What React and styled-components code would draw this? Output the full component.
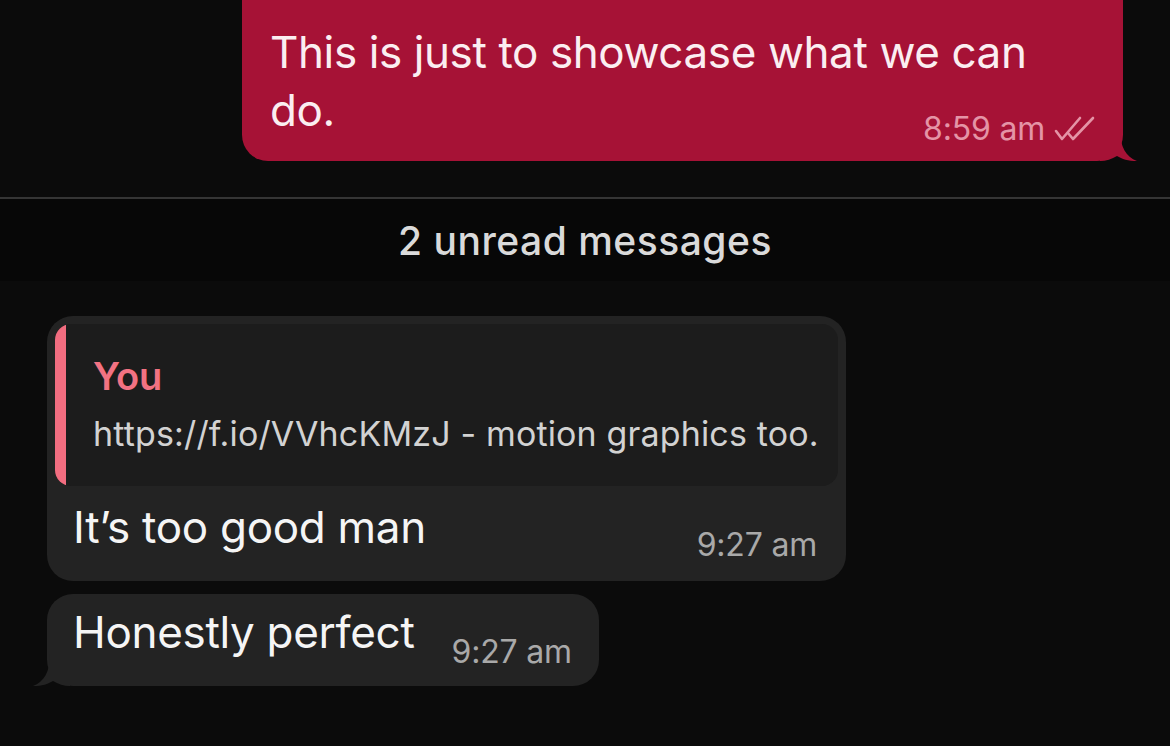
import React from 'react';
import styled, { createGlobalStyle } from 'styled-components';

const GlobalStyle = createGlobalStyle`
  html, body {
    margin: 0;
    padding: 0;
    background: #0b0b0b;
  }
  body {
    font-family: Inter, "Noto Sans", "Liberation Sans", sans-serif;
    -webkit-font-smoothing: antialiased;
  }
`;

const Screen = styled.div`
  width: 1170px;
  height: 746px;
  overflow: hidden;
  display: flex;
  flex-direction: column;
  background: #0b0b0b;
`;

const OutRow = styled.div`
  display: flex;
  justify-content: flex-end;
  padding-right: 47px;
`;

const Bubble = styled.div`
  position: relative;
  display: ${(p) => (p.$inline ? 'inline-flex' : 'flex')};
  flex-direction: column;
  background: ${(p) => p.$bg};
  border-radius: 26px;
  box-sizing: border-box;
  width: ${(p) => p.$width || 'auto'};
`;

const OutBubble = styled(Bubble)`
  margin-top: -40px;
  padding: 63px 24px 16px 28px;
  display: grid;
`;

const OutText = styled.div`
  grid-area: 1 / 1;
  color: #fbeef1;
  font-size: 44px;
  line-height: 58px;
  letter-spacing: -0.4px;
  padding-bottom: 6px;
`;

const Meta = styled.div`
  display: flex;
  align-items: center;
  gap: 8px;
  font-size: 32px;
  line-height: 40px;
  letter-spacing: -0.2px;
  color: ${(p) => p.$color};
  white-space: nowrap;
`;

const OutMeta = styled(Meta)`
  grid-area: 1 / 1;
  justify-self: end;
  align-self: end;
  margin-bottom: -4px;
`;

const Tail = styled.svg`
  position: absolute;
  bottom: 0;
  ${(p) => (p.$side === 'right' ? 'right: -17px;' : 'left: -17px;')}
  width: 40px;
  height: 32px;
  transform: ${(p) => (p.$side === 'left' ? 'scaleX(-1)' : 'none')};
`;

const UnreadBand = styled.div`
  margin-top: 36px;
  border-top: 2px solid #353535;
  background: #070707;
  height: 82px;
  display: flex;
  align-items: center;
  justify-content: center;
  color: #dadada;
  font-size: 39px;
  font-weight: 500;
  letter-spacing: 0.5px;
`;

const InColumn = styled.div`
  display: flex;
  flex-direction: column;
  align-items: flex-start;
  padding-left: 47px;
  padding-top: 35px;
  gap: 13px;
`;

const InBubble = styled(Bubble)`
  padding: 8px 8px 0 8px;
`;

const Quote = styled.div`
  display: flex;
  background: #1c1c1c;
  border-radius: 16px;
  overflow: hidden;
  height: 162px;
`;

const QuoteBar = styled.div`
  width: 11px;
  background: #f26d80;
  flex-shrink: 0;
  border-radius: 16px 0 0 16px;
`;

const QuoteBody = styled.div`
  display: flex;
  flex-direction: column;
  padding: 28px 20px 0 27px;
`;

const QuoteName = styled.div`
  color: #f27282;
  font-size: 38px;
  font-weight: 600;
  line-height: 48px;
  letter-spacing: -0.3px;
`;

const QuoteText = styled.div`
  color: #d2d2d2;
  font-size: 34px;
  line-height: 48px;
  margin-top: 10px;
  letter-spacing: 0.15px;
  white-space: nowrap;
`;

const MsgRow = styled.div`
  display: flex;
  align-items: flex-end;
  justify-content: space-between;
  gap: 37px;
  padding: ${(p) => p.$pad};
`;

const MsgText = styled.div`
  color: #f5f5f5;
  font-size: 44px;
  line-height: 56px;
  letter-spacing: -0.3px;
  white-space: nowrap;
  padding-bottom: ${(p) => p.$drop}px;
`;

const Checks = () => (
  <svg width="46" height="28" viewBox="0 0 46 28" fill="none">
    <path d="M3 16 L9 24 L27 3" stroke="#e494a6" strokeWidth="2.6" strokeLinecap="round" strokeLinejoin="round" />
    <path d="M15 18 L20 24 L40 3" stroke="#e494a6" strokeWidth="2.6" strokeLinecap="round" strokeLinejoin="round" />
  </svg>
);

const TailShape = ({ color, side }) => (
  <Tail $side={side} viewBox="0 0 40 32">
    <path d="M0 0 H20 C20 18 26 28 37 32 C28 32 22 30 17 27 C12 30 6 32 0 32 Z" fill={color} />
  </Tail>
);

export default function App() {
  return (
    <>
      <GlobalStyle />
      <Screen>
        <OutRow>
          <OutBubble $bg="#a61236" $width="881px">
            <OutText>
              This is just to showcase what we can
              <br />
              do.
            </OutText>
            <OutMeta $color="#e494a6">
              8:59 am <Checks />
            </OutMeta>
            <TailShape color="#a61236" side="right" />
          </OutBubble>
        </OutRow>

        <UnreadBand>2 unread messages</UnreadBand>

        <InColumn>
          <InBubble $bg="#232323" $width="799px">
            <Quote>
              <QuoteBar />
              <QuoteBody>
                <QuoteName>You</QuoteName>
                <QuoteText>https://f.io/VVhcKMzJ - motion graphics too.</QuoteText>
              </QuoteBody>
            </Quote>
            <MsgRow $pad="13px 21px 16px 18px">
              <MsgText $drop={10}>It’s too good man</MsgText>
              <Meta $color="#a9a9a9">9:27 am</Meta>
            </MsgRow>
          </InBubble>

          <Bubble $bg="#232323" $inline>
            <MsgRow $pad="10px 27px 14px 26px">
              <MsgText $drop={12}>Honestly perfect</MsgText>
              <Meta $color="#a9a9a9">9:27 am</Meta>
            </MsgRow>
            <TailShape color="#232323" side="left" />
          </Bubble>
        </InColumn>
      </Screen>
    </>
  );
}
